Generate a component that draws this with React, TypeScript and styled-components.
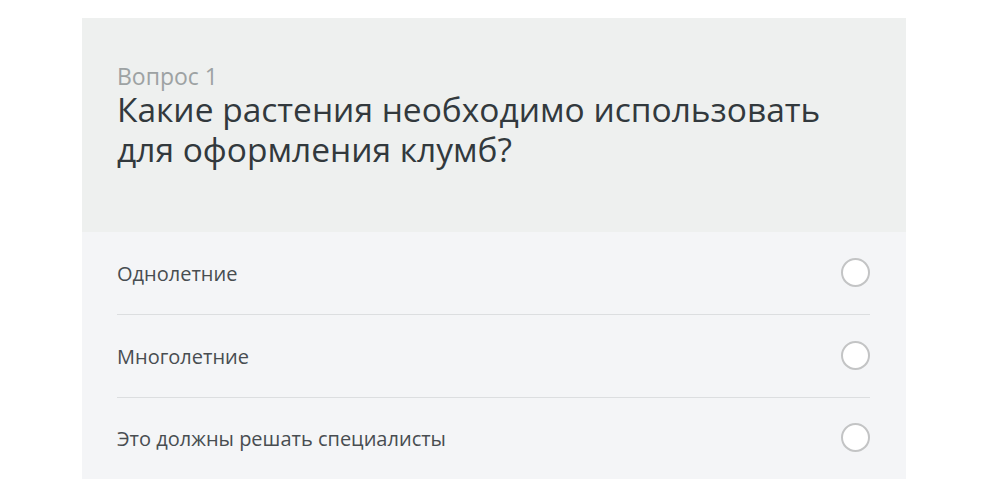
import styled, { createGlobalStyle } from 'styled-components'

const GlobalStyle = createGlobalStyle`
  html, body {
    margin: 0;
    padding: 0;
    background: #ffffff;
    font-family: "Open Sans", "Liberation Sans", sans-serif;
  }
`

const options = ['Однолетние', 'Многолетние', 'Это должны решать специалисты']

const App = () => {
  return (
    <Page>
      <GlobalStyle />
      <Card>
        <Header>
          <Label>Вопрос 1</Label>
          <Question>Какие растения необходимо использовать для оформления клумб?</Question>
        </Header>
        <OptionList>
          {options.map((text) => (
            <OptionRow key={text}>
              <OptionText>{text}</OptionText>
              <Radio type="radio" name="q1" aria-label={text} />
            </OptionRow>
          ))}
        </OptionList>
      </Card>
    </Page>
  )
}

export default App

const Page = styled.div`
  width: 1000px;
  height: 500px;
  padding: 18px 0 0 82px;
  box-sizing: border-box;
  display: flex;
`

const Card = styled.div`
  width: 824px;
  display: flex;
  flex-direction: column;
`

const Header = styled.div`
  background: #eef0ef;
  padding: 43px 35px 63px;
`

const Label = styled.div`
  font-size: 23px;
  line-height: 30px;
  color: #9da2a3;
`

const Question = styled.div`
  font-size: 33.5px;
  line-height: 40px;
  color: #32393d;
  max-width: 740px;
  margin-top: -2px;
`

const OptionList = styled.div`
  background: #f4f5f7;
  padding: 0 36px 0 35px;
`

const OptionRow = styled.label`
  display: flex;
  align-items: center;
  justify-content: space-between;
  height: 82px;
  border-bottom: 1px solid #dcdee0;
  cursor: pointer;

  &:last-child {
    border-bottom: none;
    height: 81px;
  }
`

const OptionText = styled.span`
  font-size: 20px;
  color: #484d51;
`

const Radio = styled.input`
  appearance: none;
  margin: 0 0 2px;
  width: 29px;
  height: 29px;
  border-radius: 50%;
  border: 2px solid #c3c4c5;
  background: #ffffff;
  box-sizing: border-box;
`
